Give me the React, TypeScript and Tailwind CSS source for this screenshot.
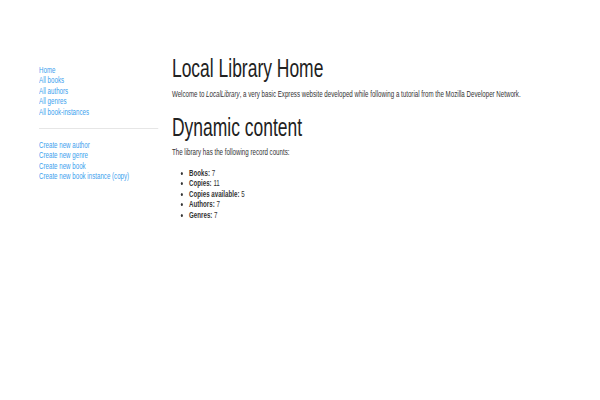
import React from 'react';

const sideLinks = ['Home', 'All books', 'All authors', 'All genres', 'All book-instances'];
const createLinks = ['Create new author', 'Create new genre', 'Create new book', 'Create new book instance (copy)'];

const counts: [string, number][] = [
  ['Books', 7],
  ['Copies', 11],
  ['Copies available', 5],
  ['Authors', 7],
  ['Genres', 7],
];

const App: React.FC = () => {
  return (
    <div className="w-[600px] h-[400px] overflow-hidden bg-white">
      {/* page is drawn wide, then squeezed horizontally like the reference */}
      <div className="w-[876px] origin-top-left scale-x-[0.685] flex font-['Liberation_Sans',Arial,sans-serif] text-[9px] leading-[10.6px] text-[#333]">
        <div className="w-[251px] pl-[57px] pt-[64.7px] shrink-0">
          <ul>
            {sideLinks.map((l) => (
              <li key={l}>
                <a className="text-[#3ba0ee]">{l}</a>
              </li>
            ))}
          </ul>
          <hr className="w-[174px] mt-[10px] mb-[11px] border-t border-[#e6e6e6]" />
          <ul>
            {createLinks.map((l) => (
              <li key={l}>
                <a className="text-[#3ba0ee]">{l}</a>
              </li>
            ))}
          </ul>
        </div>
        <div className="pt-[54.3px]">
          <h1 className="text-[25.5px] leading-[28px] text-[#222]">Local Library Home</h1>
          <p className="mt-[6.4px]">
            Welcome to <em>LocalLibrary</em>, a very basic Express website developed while following a tutorial from the
            Mozilla Developer Network.
          </p>
          <h1 className="mt-[14px] text-[25.5px] leading-[28px] text-[#222]">Dynamic content</h1>
          <p className="mt-[5.4px]">The library has the following record counts:</p>
          <ul className="mt-[10.4px] pl-[25px] list-disc">
            {counts.map(([k, v]) => (
              <li key={k}>
                <strong>{k}:</strong> {v}
              </li>
            ))}
          </ul>
        </div>
      </div>
    </div>
  );
};

export default App;
